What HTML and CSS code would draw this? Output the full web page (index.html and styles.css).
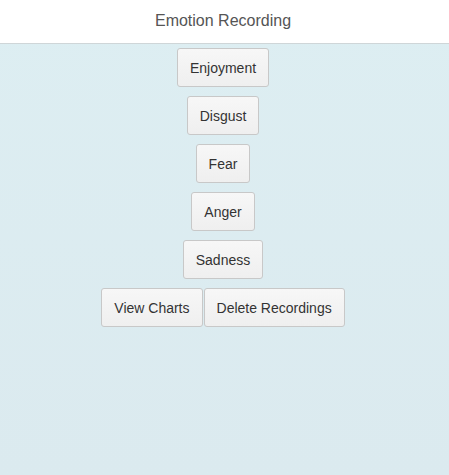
FILE: index.html
```html
<!DOCTYPE html>
<html>
<head>
<meta charset="utf-8">
<title>Emotion Recording</title>
<link rel="stylesheet" href="styles.css">
</head>
<body>
<div class="page">
  <header class="header">
    <h1 class="title">Emotion Recording</h1>
  </header>
  <main class="content">
    <button class="btn">Enjoyment</button>
    <button class="btn">Disgust</button>
    <button class="btn">Fear</button>
    <button class="btn">Anger</button>
    <button class="btn">Sadness</button>
    <div class="row">
      <button class="btn">View Charts</button>
      <button class="btn">Delete Recordings</button>
    </div>
  </main>
</div>
</body>
</html>
```
FILE: styles.css
```css
html, body {
  margin: 0;
  padding: 0;
  height: 100%;
}
body {
  font-family: "Liberation Sans", Arial, sans-serif;
  background: linear-gradient(#ddeef2, #dbeaef);
}
.page {
  display: flex;
  flex-direction: column;
  min-height: 100%;
}
.header {
  height: 43px;
  background: #ffffff;
  border-bottom: 1px solid #cfd6d8;
  display: flex;
  align-items: center;
  justify-content: center;
  padding-right: 3px;
}
.title {
  margin: 0;
  font-size: 16px;
  font-weight: normal;
  color: #555555;
  padding-bottom: 2px;
}
.content {
  display: flex;
  flex-direction: column;
  align-items: center;
  gap: 9px;
  padding-top: 4px;
  padding-right: 3px;
}
.row {
  display: flex;
  gap: 1px;
}
.btn {
  height: 39px;
  padding: 0 12px;
  font-family: "Liberation Sans", Arial, sans-serif;
  font-size: 14px;
  color: #333333;
  background: linear-gradient(#f7f7f7, #efefef);
  border: 1px solid #c8c8c8;
  border-radius: 3px;
  margin: 0;
}
```
